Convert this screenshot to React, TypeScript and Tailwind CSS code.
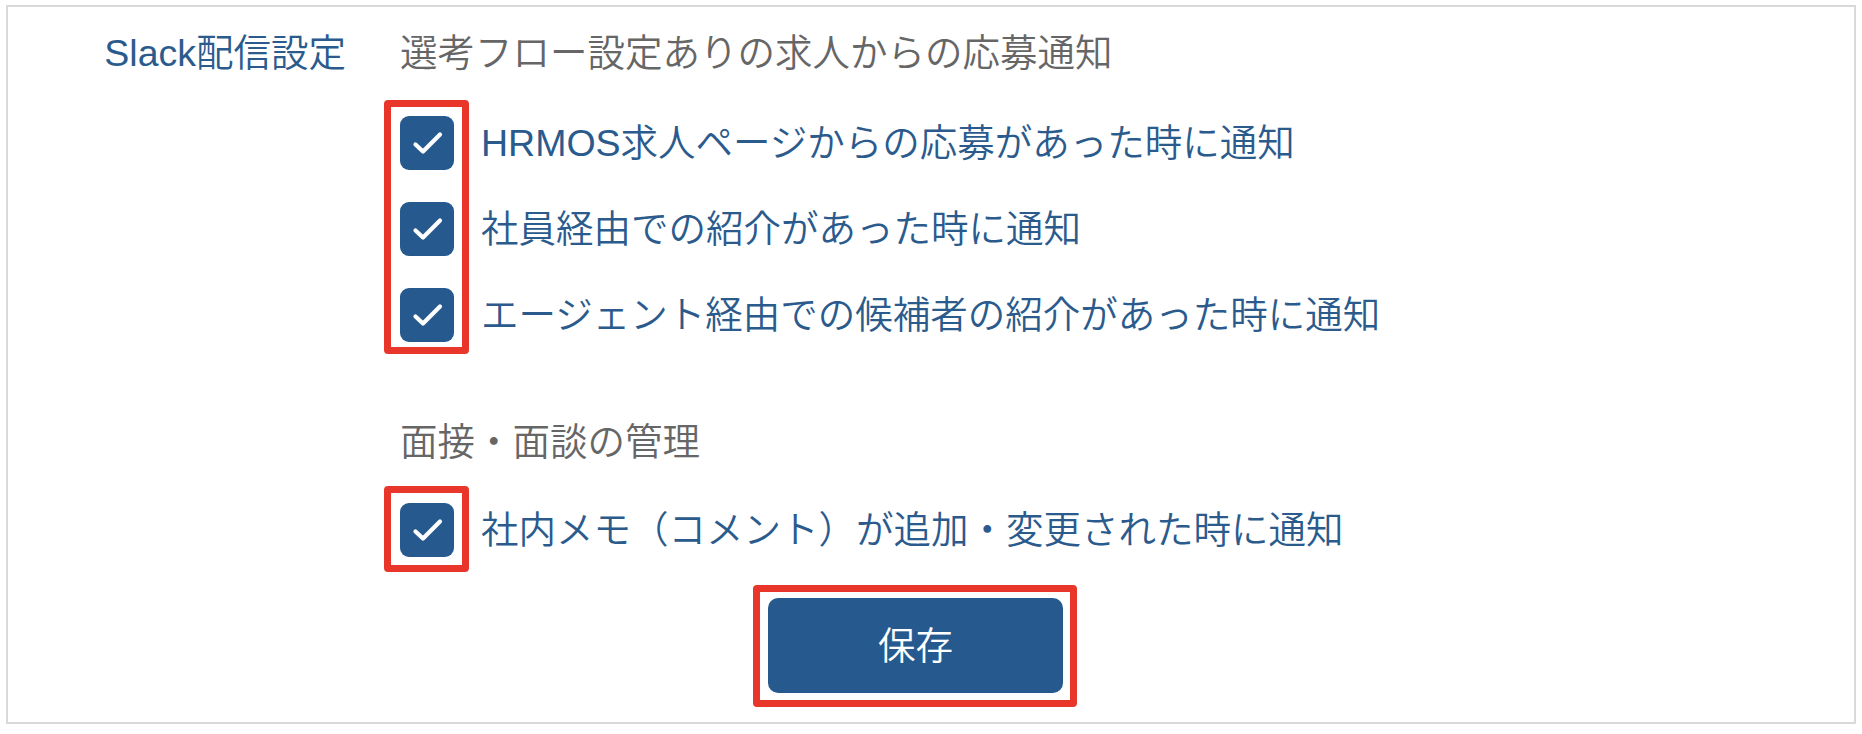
import React from "react";

const FONT = '"Liberation Sans", "Noto Sans CJK JP", sans-serif';

function Check() {
  return (
    <span className="flex h-[54px] w-[54px] shrink-0 items-center justify-center rounded-[9px] bg-[#265a8f]">
      <svg width="54" height="54" viewBox="0 0 54 54" fill="none">
        <path d="M15.5 28.5 L23 35.5 L40 18.5" stroke="#ffffff" strokeWidth="4.2" strokeLinecap="round" strokeLinejoin="round" />
      </svg>
    </span>
  );
}

function Row({ label }: { label: string }) {
  return (
    <label className="flex h-[54px] items-center gap-[27px]">
      <Check />
      <span className="whitespace-nowrap text-[#2b5b8d]">{label}</span>
    </label>
  );
}

function RedMark({ className }: { className: string }) {
  return <span className={"pointer-events-none absolute rounded-[4px] border-[7px] border-[#e8372a] " + className} />;
}

export default function App() {
  return (
    <div className="bg-white" style={{ fontFamily: FONT }}>
      <div className="ml-[6px] mt-[5px] h-[719px] w-[1850px] border-2 border-[#d9d9d9] bg-white text-[37.5px] font-[350] leading-[54px]">
        <div className="flex pt-[19px]">
          <div className="w-[392px] shrink-0 pr-[54px] text-right text-[#2b5b8d]">Slack配信設定</div>
          <div className="flex flex-col">
            <div className="text-[#666666]">選考フロー設定ありの求人からの応募通知</div>
            <div className="relative mt-[36px] flex flex-col gap-[32px]">
              <RedMark className="left-[-16px] top-[-16px] h-[254px] w-[85px]" />
              <Row label="HRMOS求人ページからの応募があった時に通知" />
              <Row label="社員経由での紹介があった時に通知" />
              <Row label="エージェント経由での候補者の紹介があった時に通知" />
            </div>
            <div className="mt-[73px] text-[#666666]">面接・面談の管理</div>
            <div className="relative mt-[34px] flex flex-col">
              <RedMark className="left-[-16px] top-[-17px] h-[86px] w-[85px]" />
              <Row label="社内メモ（コメント）が追加・変更された時に通知" />
            </div>
            <div className="relative ml-[368px] mt-[41px] w-[295px]">
              <RedMark className="left-[-15px] top-[-13px] h-[122px] w-[324px]" />
              <button className="flex h-[95px] w-[295px] items-center justify-center rounded-[10px] bg-[#265a8f] text-white">
                保存
              </button>
            </div>
          </div>
        </div>
      </div>
    </div>
  );
}
